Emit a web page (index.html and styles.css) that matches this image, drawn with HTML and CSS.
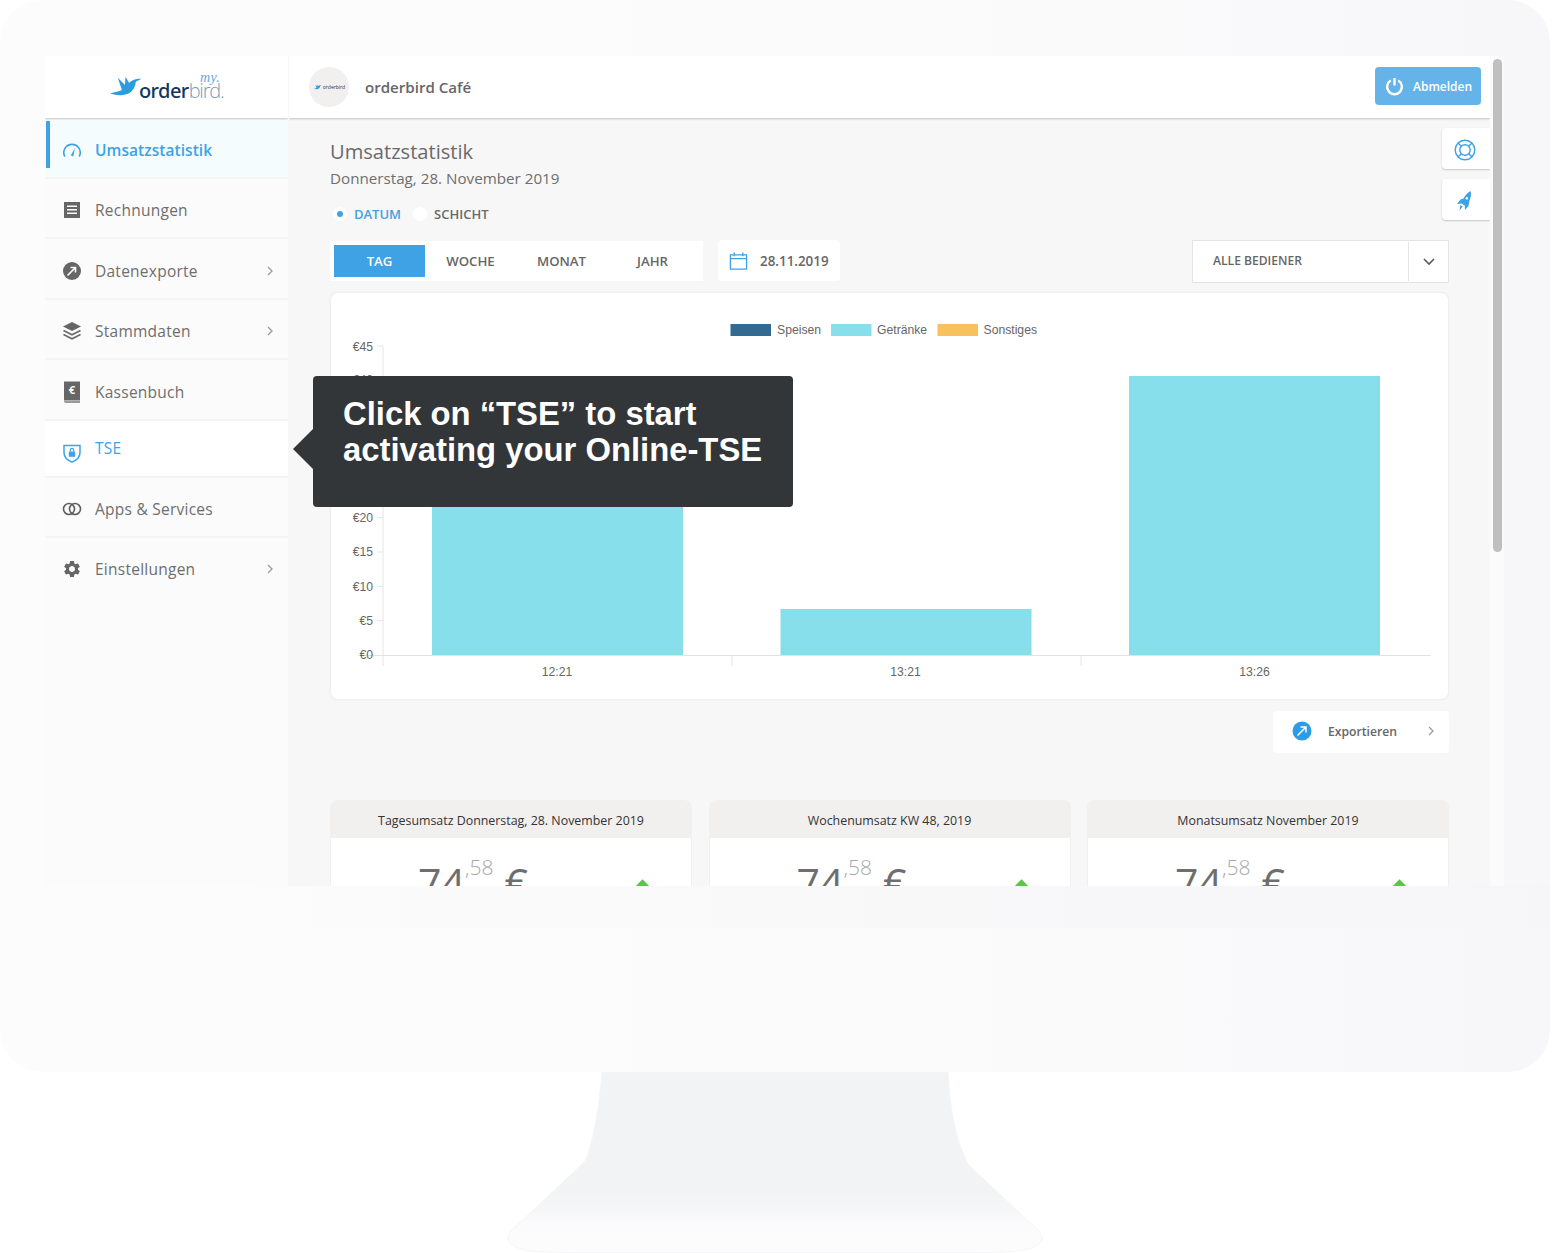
FILE: index.html
```html
<!DOCTYPE html>
<html lang="de">
<head>
<meta charset="utf-8">
<title>orderbird – Umsatzstatistik</title>
<link rel="stylesheet" href="styles.css">
</head>
<body>
<div class="device">
  <div class="monitor">
    <div class="screen">
      <aside class="sidebar">
        <div class="logo-box">
          <div class="logo">
            <svg class="logo-bird" viewBox="0 0 32 22"><path d="M1 17.500C6 16.500 10 16 12.500 14.500L8.500 2.500L15.500 9.500L16 1.500L19.500 7.500C21.500 5.500 24.500 3.500 31.500 3.500L26 6.500C25.500 13 21 20 10.500 19.500C6.500 19.300 3.500 18.500 1 17.500Z"/></svg>
            <span class="logo-order">order</span><span class="logo-bird-text">bird.</span>
            <span class="logo-my">my.</span>
          </div>
        </div>
        <nav class="nav">
          <a class="nav-item active first">
            <svg class="nav-icon blue-stroke" viewBox="0 0 20 20"><path d="M2.800 16.500A8.200 8.200 0 1 1 17.200 16.500" fill="none" stroke-width="1.600"/><path d="M8.800 15.500L13 8L11.300 16.500Z" class="blue-fill"/></svg>
            <span>Umsatzstatistik</span>
          </a>
          <a class="nav-item">
            <svg class="nav-icon" viewBox="0 0 20 20"><path fill-rule="evenodd" d="M2 2h16v16H2zM5 5.500v1.600h10V5.500zM5 9v1.600h10V9zM5 12.500v1.600h10v-1.600z"/></svg>
            <span>Rechnungen</span>
          </a>
          <a class="nav-item">
            <svg class="nav-icon" viewBox="0 0 20 20"><circle cx="10" cy="10" r="9"/><path d="M5.500 14.500L13 7M8.500 6.500H13.500V11.500" fill="none" stroke="#fff" stroke-width="1.600"/></svg>
            <span>Datenexporte</span>
            <svg class="chev" viewBox="0 0 8 12"><path d="M2 2L6 6L2 10"/></svg>
          </a>
          <a class="nav-item">
            <svg class="nav-icon" viewBox="0 0 20 20"><path d="M10 1L19 5.500L10 10L1 5.500Z"/><path d="M1.500 9.500L10 13.700L18.500 9.500M1.500 13.500L10 17.700L18.500 13.500" fill="none" stroke="#6b6b6b" stroke-width="1.700"/></svg>
            <span>Stammdaten</span>
            <svg class="chev" viewBox="0 0 8 12"><path d="M2 2L6 6L2 10"/></svg>
          </a>
          <a class="nav-item cash">
            <svg class="nav-icon tall" viewBox="0 0 20 24"><path d="M2 1.500h16v19H2z"/><path d="M2 21h16v2H3.500L2 22z" fill="#9a9a9a"/><text x="10" y="14" class="book-euro">€</text></svg>
            <span>Kassenbuch</span>
          </a>
          <a class="nav-item tse">
            <svg class="nav-icon shield" viewBox="0 0 20 20"><path d="M2 2.500H18V9.500C18 14 14.500 17.300 10 19C5.500 17.300 2 14 2 9.500Z" fill="none" stroke="#3ea2e5" stroke-width="1.500"/><path d="M6.800 8.500H13.200V13.800H6.800Z" class="blue-fill"/><path d="M8.300 8.500V7A1.700 1.700 0 0 1 11.700 7V8.500" fill="none" stroke="#3ea2e5" stroke-width="1.200"/></svg>
            <span>TSE</span>
          </a>
          <a class="nav-item">
            <svg class="nav-icon" viewBox="0 0 20 20"><circle cx="7" cy="10" r="5.500" fill="none" stroke="#5f5f5f" stroke-width="1.600"/><circle cx="13" cy="10" r="5.500" fill="none" stroke="#5f5f5f" stroke-width="1.600"/></svg>
            <span>Apps &amp; Services</span>
          </a>
          <a class="nav-item last">
            <svg class="nav-icon" viewBox="0 0 24 24"><path d="M19.140 12.940c.04-.3.06-.61.06-.94 0-.32-.02-.64-.07-.94l2.030-1.580c.18-.14.23-.41.12-.61l-1.920-3.320c-.12-.22-.37-.29-.59-.22l-2.390.96c-.5-.38-1.030-.7-1.620-.94l-.36-2.540c-.04-.24-.24-.41-.48-.41h-3.840c-.24 0-.43.17-.47.41l-.36 2.540c-.59.24-1.130.57-1.620.94l-2.390-.96c-.22-.08-.47 0-.59.22L2.740 8.870c-.12.21-.08.47.12.61l2.030 1.580c-.05.3-.09.63-.09.94s.02.64.07.94l-2.030 1.580c-.18.14-.23.41-.12.61l1.920 3.320c.12.22.37.29.59.22l2.390-.96c.5.38 1.030.7 1.620.94l.36 2.540c.05.24.24.41.48.41h3.840c.24 0 .44-.17.47-.41l.36-2.540c.59-.24 1.130-.56 1.620-.94l2.390.96c.22.08.47 0 .59-.22l1.920-3.320c.12-.22.07-.47-.12-.61l-2.010-1.580zM12 15.600c-1.980 0-3.600-1.620-3.600-3.600s1.620-3.600 3.600-3.600 3.600 1.620 3.600 3.600-1.620 3.600-3.600 3.600z"/></svg>
            <span>Einstellungen</span>
            <svg class="chev" viewBox="0 0 8 12"><path d="M2 2L6 6L2 10"/></svg>
          </a>
        </nav>
      </aside>

      <main class="main">
        <header class="topbar">
          <div class="avatar">
            <svg class="avatar-bird" viewBox="0 0 32 22"><path d="M1 17.500C6 16.500 10 16 12.500 14.500L8.500 2.500L15.500 9.500L16 1.500L19.500 7.500C21.500 5.500 24.500 3.500 31.500 3.500L26 6.500C25.500 13 21 20 10.500 19.500C6.500 19.300 3.500 18.500 1 17.500Z"/></svg>
            <span class="avatar-text">orderbird</span>
          </div>
          <span class="cafe">orderbird Café</span>
          <button class="logout">
            <svg class="power" viewBox="0 0 20 20"><path d="M6 4.200A7.800 7.800 0 1 0 14 4.200M10 1.500V9.500" fill="none" stroke="#fff" stroke-width="2.500"/></svg>
            <span>Abmelden</span>
          </button>
        </header>

        <div class="content">
          <h1 class="title">Umsatzstatistik</h1>
          <p class="subtitle">Donnerstag, 28. November 2019</p>

          <div class="radios">
            <span class="radio on"></span><span class="radio-label on">DATUM</span>
            <span class="radio"></span><span class="radio-label">SCHICHT</span>
          </div>

          <div class="controls">
            <div class="tabs">
              <span class="tab selected">TAG</span>
              <span class="tab">WOCHE</span>
              <span class="tab">MONAT</span>
              <span class="tab">JAHR</span>
            </div>
            <div class="date">
              <svg class="cal" viewBox="0 0 20 20"><path d="M1.500 3.500H18.500V18.500H1.500ZM1.500 7.500H18.500M5.500 1V5M14.500 1V5" fill="none" stroke="#3ea2e5" stroke-width="1.400"/></svg>
              <span>28.11.2019</span>
            </div>
            <div class="select">
              <span class="select-text">ALLE BEDIENER</span>
              <span class="select-arrow">
                <svg class="select-chev" viewBox="0 0 14 9"><path d="M2 2L7 7L12 2"/></svg>
              </span>
            </div>
          </div>

          <section class="chart-card">
            <svg class="chart" width="1117" height="406" viewBox="331 293 1117 406">
              <g class="legend">
                <rect x="730.500" y="324" width="40.500" height="12" fill="#336a92"/>
                <text x="777" y="334">Speisen</text>
                <rect x="831" y="324" width="40.500" height="12" fill="#86dfeb"/>
                <text x="877" y="334">Getränke</text>
                <rect x="937.500" y="324" width="40.500" height="12" fill="#f8c15e"/>
                <text x="983.500" y="334">Sonstiges</text>
              </g>
              <path class="gridline" d="M383 346V666M732 655V666M1081 655V666M1430 655V656M377 346H383M377 380.300H383M377 414.700H383M377 449H383M377 483.300H383M377 517.700H383M377 552H383M377 586.300H383M377 620.700H383"/>
              <rect x="432" y="468" width="251" height="187" fill="#86dfeb"/>
              <rect x="780.500" y="609" width="251" height="46" fill="#86dfeb"/>
              <rect x="1129" y="376" width="251" height="279" fill="#86dfeb"/>
              <path class="baseline" d="M360 655.500H1430"/>
              <g class="ylabels">
                <text x="373" y="350.500">€45</text>
                <text x="373" y="383.500">€40</text>
                <text x="373" y="419">€35</text>
                <text x="373" y="453">€30</text>
                <text x="373" y="487.500">€25</text>
                <text x="373" y="521.500">€20</text>
                <text x="373" y="556">€15</text>
                <text x="373" y="590.500">€10</text>
                <text x="373" y="624.500">€5</text>
                <text x="373" y="659">€0</text>
              </g>
              <g class="xlabels">
                <text x="557" y="675.500">12:21</text>
                <text x="905.500" y="675.500">13:21</text>
                <text x="1254.500" y="675.500">13:26</text>
              </g>
            </svg>
          </section>

          <div class="export-row">
            <button class="export">
              <svg class="export-icon" viewBox="0 0 20 20"><circle cx="10" cy="10" r="9.500" fill="#2d9ce6"/><path d="M5.500 14.500L13.500 6.500M8.500 6H14V11.500" fill="none" stroke="#fff" stroke-width="1.500"/></svg>
              <span class="export-text">Exportieren</span>
              <svg class="chev" viewBox="0 0 8 12"><path d="M2 2L6 6L2 10"/></svg>
            </button>
          </div>

          <div class="stats">
            <article class="stat">
              <h2 class="stat-head">Tagesumsatz Donnerstag, 28. November 2019</h2>
              <div class="stat-body"><span class="amount">74<sup class="cents">,58</sup><span class="currency">€</span></span><span class="up"></span></div>
            </article>
            <article class="stat">
              <h2 class="stat-head">Wochenumsatz KW 48, 2019</h2>
              <div class="stat-body"><span class="amount">74<sup class="cents">,58</sup><span class="currency">€</span></span><span class="up"></span></div>
            </article>
            <article class="stat">
              <h2 class="stat-head">Monatsumsatz November 2019</h2>
              <div class="stat-body"><span class="amount">74<sup class="cents">,58</sup><span class="currency">€</span></span><span class="up"></span></div>
            </article>
          </div>
        </div>

        <div class="side-tabs">
          <button class="side-tab">
            <svg class="side-icon" viewBox="0 0 22 22"><g fill="none" stroke="#3ea2e5" stroke-width="1.400"><circle cx="11" cy="11" r="9.800"/><circle cx="11" cy="11" r="5.200"/><path d="M4 4L7.300 7.300M18 4L14.700 7.300M4 18L7.300 14.700M18 18L14.700 14.700"/></g></svg>
          </button>
          <button class="side-tab">
            <svg class="side-icon" viewBox="0 0 22 22"><path class="blue-fill" fill-rule="evenodd" d="M16.500 1C17.500 4 17 7.500 15.500 10.500L14.500 16L11 20L10.800 15.500L7.500 13.500L3 14L6.500 9.500L9.500 8.500C11 5.500 13.500 2.500 16.500 1ZM12.800 7A1.300 1.300 0 1 0 12.900 7ZM6.300 15L8.700 16.400L5.500 20.500Z"/></svg>
          </button>
        </div>
      </main>

      <div class="scroll-track"><div class="scroll-thumb"></div></div>

      <div class="tooltip">Click on “TSE” to start<br>activating your Online-TSE</div>
    </div>
    <div class="chin-band"></div>
  </div>
  <svg class="stand" viewBox="0 0 552 181" width="552" height="181">
    <defs>
      <linearGradient id="standFill" x1="0" y1="0" x2="0" y2="1">
        <stop offset="0" stop-color="#f1f3f4"/>
        <stop offset="0.66" stop-color="#f2f3f5"/>
        <stop offset="0.8" stop-color="#f8f8fa"/>
        <stop offset="0.84" stop-color="#fbfbfc"/>
        <stop offset="1" stop-color="#fcfcfc"/>
      </linearGradient>
    </defs>
    <path fill="url(#standFill)" stroke="#f6f6f8" d="M96 0H442C444 35 449 65 459 85C460 90 462 92 465 95L532 158C538 164 538 170 530 174C520 180 500 180.500 470 180.500H70C40 180.500 16 180 8 174C0 170 0 164 6 158L73 95C76 92 79 90 81 85C88 65 93 35 96 0Z"/>
  </svg>
</div>
</body>
</html>
```

FILE: styles.css
```css
* { box-sizing: border-box; }

html, body {
  margin: 0;
  padding: 0;
  background: #fff;
}

body {
  font-family: "Open Sans", "Noto Sans", sans-serif;
  color: #666;
}

.device {
  width: 1552px;
  height: 1253px;
  display: flex;
  flex-direction: column;
  align-items: flex-start;
}

.monitor {
  width: 1550px;
  height: 1072px;
  flex: none;
  padding: 56px 46px 0 45px;
  border-radius: 42px;
  background: linear-gradient(90deg, #fcfcfc 0%, #fbfbfb 60%, #f7f7fa 100%);
}

.chin-band {
  height: 42px;
  margin: 0 -46px 0 265px;
  background: linear-gradient(90deg, #fbfbfb 0%, #f8f8f9 50%, #f6f6f9 100%);
}

.screen {
  position: relative;
  width: 1459px;
  height: 830px;
  display: flex;
  overflow: hidden;
  background: #fbfbfb;
}

/* Sidebar */
.sidebar {
  width: 243px;
  flex: none;
  background: #fbfbfb;
}

.logo-box {
  height: 62px;
  background: #fff;
  box-shadow: 0 1px 2px rgba(0, 0, 0, .22);
  clip-path: inset(0 0 -5px 0);
  position: relative;
}

.logo {
  display: flex;
  align-items: flex-end;
  height: 62px;
  padding: 0 0 15px 64px;
  position: relative;
  font-family: "Noto Sans", sans-serif;
  font-size: 20px;
  line-height: 24px;
  letter-spacing: -.6px;
}

.logo-bird {
  width: 33px;
  height: 23px;
  fill: #2a9ce0;
  margin: 0 -3px 5px 0;
  flex: none;
}

.logo-order { color: #13365f; font-weight: 500; }
.logo-bird-text { color: #7d9cb8; font-weight: 300; font-family: "Open Sans", sans-serif; letter-spacing: -1.2px; }

.logo-my {
  position: absolute;
  left: 155px;
  top: 15px;
  font-family: "Liberation Serif", serif;
  font-style: italic;
  font-size: 14px;
  line-height: 14px;
  color: #67a9dc;
  letter-spacing: .3px;
}

.nav { display: flex; flex-direction: column; padding-top: 2px; }

.nav-item {
  display: flex;
  align-items: center;
  height: 60.400px;
  padding: 4px 14px 0 17px;
  border-bottom: 2px solid #f4f4f4;
  font-size: 15.500px;
  letter-spacing: .25px;
  color: #6e6e6e;
  position: relative;
}

.nav-item.cash { padding-top: 6px; }
.nav-item.last { border-bottom: 0; padding-top: 2px; }

.nav-item > span { margin-left: 13px; flex: 1; }

.nav-item.first { height: 59px; padding-top: 2px; background: #f5fcfe; }

.nav-item.active {
  color: #3ea2e5;
  font-weight: 600;
  font-size: 15.500px;
  letter-spacing: .05px;
}

.nav-item.active::before {
  content: "";
  position: absolute;
  left: 1px;
  top: 1px;
  width: 4px;
  height: 47px;
  background: #3ea2e5;
}

.nav-item.tse {
  height: 57px;
  padding-top: 0;
  background: #fff;
  color: #3ea2e5;
  align-items: flex-start;
}

.nav-item.tse > span { margin-top: 16px; }
.nav-item.tse .shield { margin-top: 22px; }

.nav-icon {
  width: 20px;
  height: 20px;
  flex: none;
  fill: #666;
}

.nav-icon.tall { height: 24px; }
.nav-icon.shield { fill: none; }
.blue-stroke { stroke: #3ea2e5; fill: none; }
.blue-fill { fill: #3ea2e5; stroke: none; }

.book-euro {
  fill: #fff;
  font-size: 11px;
  font-weight: 700;
  text-anchor: middle;
  font-family: "Open Sans", sans-serif;
}

.chev {
  width: 8px;
  height: 12px;
  flex: none;
  fill: none;
  stroke: #9a9a9a;
  stroke-width: 1.300;
}

/* Main column */
.main {
  position: relative;
  width: 1202px;
  flex: none;
  background: #f7f7f7;
  overflow: hidden;
}

.topbar {
  height: 62px;
  display: flex;
  align-items: center;
  padding: 0 9px 0 20px;
  background: #fff;
  box-shadow: 0 1px 2px rgba(0, 0, 0, .22);
  clip-path: inset(0 0 -5px 0);
  margin-left: 1px;
  position: relative;
}

.avatar {
  width: 40px;
  height: 40px;
  flex: none;
  border-radius: 50%;
  background: #f2f0ee;
  display: flex;
  align-items: center;
  justify-content: center;
  gap: 1px;
}

.avatar-bird { width: 9px; height: 6px; fill: #2a9ce0; }
.avatar-text { font-size: 5px; line-height: 6px; color: #13365f; }

.cafe {
  margin-left: 16px;
  flex: 1;
  font-size: 15.100px;
  font-weight: 600;
  color: #666;
}

.logout {
  width: 106px;
  height: 38px;
  border: 0;
  border-radius: 4px;
  background: #64b4e9;
  color: #fff;
  display: flex;
  align-items: center;
  padding: 0 0 0 10px;
  font: 600 12px "Open Sans", sans-serif;
  margin-top: -2px;
}

.power { width: 19px; height: 20px; margin-right: 9px; }

.content {
  padding: 19px 41px 0 42px;
  width: 1202px;
}

.title {
  margin: 0;
  font-size: 20.100px;
  line-height: 30px;
  font-weight: 400;
  color: #6a6a6a;
}

.subtitle {
  margin: 0;
  font-size: 15.200px;
  line-height: 22px;
  color: #6e6e6e;
}

.radios {
  display: flex;
  align-items: center;
  height: 20px;
  margin-top: 15px;
  padding-left: 3px;
  font-size: 13px;
  font-weight: 600;
}

.radio {
  width: 14px;
  height: 14px;
  border-radius: 50%;
  background: #fff;
  position: relative;
  flex: none;
}

.radio.on::after {
  content: "";
  position: absolute;
  left: 4px;
  top: 4px;
  width: 6px;
  height: 6px;
  border-radius: 50%;
  background: #3ea2e5;
}

.radio-label { margin: 0 12px 0 7px; color: #6a6a6a; }
.radio-label.on { margin-right: 12px; color: #3ea2e5; }

.controls {
  display: flex;
  align-items: flex-start;
  margin-top: 16px;
  height: 43px;
}

.tabs {
  display: flex;
  width: 373px;
  height: 40px;
  margin-top: 1px;
  padding: 4px;
  background: #fff;
}

.tab {
  width: 91px;
  height: 32px;
  line-height: 33px;
  text-align: center;
  font-size: 13.200px;
  font-weight: 600;
  color: #666;
}

.tab.selected { background: #3ea2e5; color: #fff; }

.date {
  width: 122px;
  height: 41px;
  margin-left: 15px;
  border-radius: 4px;
  background: #fff;
  display: flex;
  align-items: center;
  padding-left: 11px;
  font-size: 13.400px;
  font-weight: 600;
  color: #666;
}

.cal { width: 19px; height: 20px; margin-right: 12px; flex: none; }

.select {
  width: 257px;
  height: 43px;
  margin-left: auto;
  display: flex;
  align-items: center;
  background: #fff;
  border: 1px solid #e4e4e4;
}

.select-text {
  flex: 1;
  padding: 0 0 2px 20px;
  font-size: 12.100px;
  font-weight: 600;
  color: #666;
}

.select-arrow {
  width: 40px;
  height: 39px;
  border-left: 1px solid #e4e4e4;
  display: flex;
  align-items: center;
  justify-content: center;
}

.select-chev {
  width: 14px;
  height: 9px;
  fill: none;
  stroke: #5a5a5a;
  stroke-width: 1.600;
}

.chart-card {
  margin-top: 9px;
  width: 1119px;
  height: 408px;
  background: #fff;
  border: 1px solid #efefef;
  border-radius: 8px;
  box-shadow: 0 0 2px rgba(0, 0, 0, .05);
}

.chart { display: block; }

.legend text, .ylabels text, .xlabels text {
  font-family: "Liberation Sans", sans-serif;
  font-size: 12.200px;
  fill: #666;
}

.ylabels text { text-anchor: end; }
.xlabels text { text-anchor: middle; }

.gridline { fill: none; stroke: #e6e6e6; stroke-width: 1; }
.baseline { fill: none; stroke: #e2e2e2; stroke-width: 1; }

.export-row {
  display: flex;
  justify-content: flex-end;
  margin-top: 11px;
}

.export {
  width: 176px;
  height: 42px;
  border: 0;
  border-radius: 4px;
  background: #fff;
  display: flex;
  align-items: center;
  padding: 0 14px 2px 19px;
  font: 600 12.200px "Open Sans", sans-serif;
  color: #666;
}

.export-icon { width: 20px; height: 20px; flex: none; }
.export-text { flex: 1; text-align: left; margin-left: 16px; }

.stats {
  display: flex;
  justify-content: space-between;
  margin-top: 47px;
}

.stat {
  width: 362px;
  height: 200px;
  border: 1px solid #f2efee;
  border-top: 0;
  border-radius: 8px 8px 0 0;
  background: #fff;
}

.stat-head {
  margin: -1px;
  margin-top: 0;
  height: 38px;
  border-radius: 8px 8px 0 0;
  background: #f2f0ee;
  font-size: 12.400px;
  font-weight: 400;
  line-height: 41px;
  text-align: center;
  color: #333;
}

.stat-body {
  position: relative;
  padding: 20px 0 0 87px;
}

.amount {
  font-size: 41px;
  line-height: 50px;
  font-weight: 400;
  color: #6e6e6e;
  display: block;
}

.cents {
  font-size: 21px;
  font-weight: 300;
  color: #a8a8a8;
  vertical-align: baseline;
  position: relative;
  top: -23px;
  line-height: 0;
}

.currency { margin-left: 11px; }

.up {
  position: absolute;
  left: 305px;
  top: 45px;
  width: 13px;
  height: 13px;
  background: #5ac54a;
  transform: rotate(45deg);
}

/* Floating helpers */
.side-tabs {
  position: absolute;
  right: 0;
  top: 72px;
  display: flex;
  flex-direction: column;
  gap: 10px;
}

.side-tab {
  width: 48px;
  height: 41px;
  border: 0;
  background: #fff;
  border-radius: 4px 0 0 4px;
  box-shadow: 0 1px 2px rgba(0, 0, 0, .2);
  display: flex;
  align-items: center;
  justify-content: center;
  padding: 2px 2px 0 0;
}

.side-icon { width: 22px; height: 22px; }

.scroll-track {
  width: 14px;
  flex: none;
  background: #fbfbfb;
  padding: 3px 2px 0 3px;
}

.scroll-thumb {
  width: 9px;
  height: 493px;
  border-radius: 5px;
  background: #bfbfbf;
}

.tooltip {
  position: absolute;
  left: 268px;
  top: 320px;
  width: 480px;
  height: 131px;
  padding: 20px 0 0 30px;
  border-radius: 4px;
  background: #323638;
  color: #fff;
  font-family: "Liberation Sans", Arial, sans-serif;
  font-weight: 700;
  font-size: 32.800px;
  line-height: 36px;
}

.tooltip::before {
  content: "";
  position: absolute;
  left: -20px;
  top: 53px;
  border-style: solid;
  border-width: 20px 20px 20px 0;
  border-color: transparent #323638 transparent transparent;
}

.stand { display: block; flex: none; margin-left: 506px; }
```
